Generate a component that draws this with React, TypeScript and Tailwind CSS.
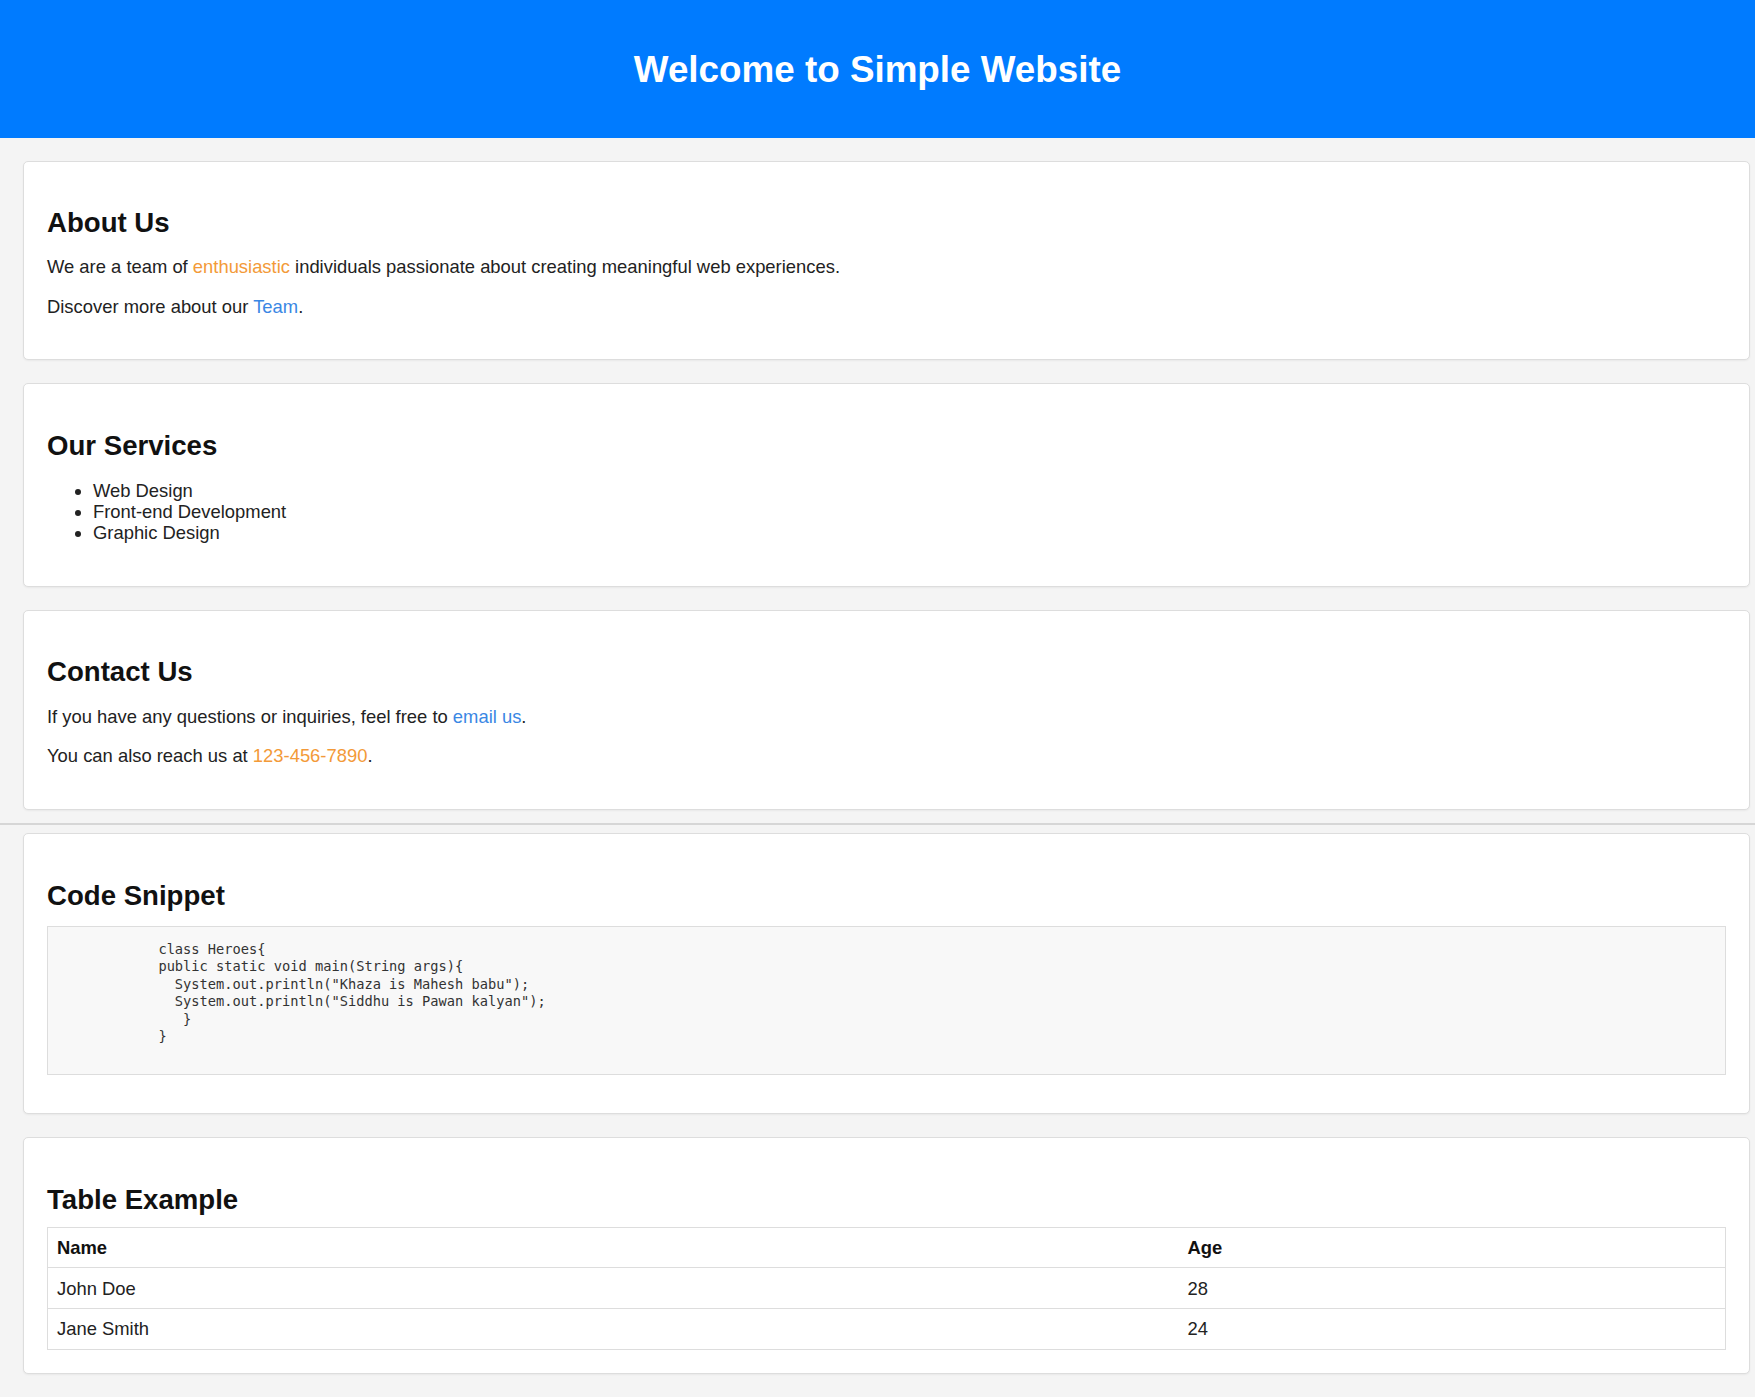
import React from "react";

const sans = { fontFamily: '"Liberation Sans", Arial, sans-serif' };

function Card({ children, className = "" }: { children: React.ReactNode; className?: string }) {
  return (
    <section
      className={`bg-white border border-[#dddddd] rounded-[5px] shadow-[0_1px_2px_rgba(0,0,0,0.05)] px-[23px] pt-[23px] pb-[23px] ${className}`}
    >
      {children}
    </section>
  );
}

function H2({ children, className = "mt-[23px] mb-[18px]" }: { children: React.ReactNode; className?: string }) {
  return <h2 className={`text-[27.6px] leading-[31.7px] font-bold text-[#111] ${className}`}>{children}</h2>;
}

const code = `            class Heroes{
            public static void main(String args){
              System.out.println("Khaza is Mahesh babu");
              System.out.println("Siddhu is Pawan kalyan");
               }
            }`;

export default function App() {
  return (
    <div className="min-h-screen bg-[#f4f4f4] text-[#222] text-[18.4px] leading-[21.2px]" style={sans}>
      <header className="bg-[#007bff] h-[138px] flex items-center justify-center">
        <h1 className="text-white font-bold text-[36.8px] leading-[42px] mt-[1px]">Welcome to Simple Website</h1>
      </header>
      <main className="pl-[23px] pr-[5px] pt-[23px] pb-[23px] flex flex-col">
        <Card>
          <H2 className="mt-[21.5px] mb-[18px]">About Us</H2>
          <p className="mb-[18.4px]">
            We are a team of <span className="text-[#f39a38]">enthusiastic</span> individuals passionate about creating
            meaningful web experiences.
          </p>
          <p className="mb-[19px]">
            Discover more about our <a className="text-[#3a87e4]">Team</a>.
          </p>
        </Card>
        <Card className="mt-[23px]">
          <H2>Our Services</H2>
          <ul className="list-disc pl-[46px] mb-[19.5px]">
            <li>Web Design</li>
            <li>Front-end Development</li>
            <li>Graphic Design</li>
          </ul>
        </Card>
        <Card className="mt-[23px]">
          <H2 className="mt-[22px] mb-[18px]">Contact Us</H2>
          <p className="mb-[18.4px]">
            If you have any questions or inquiries, feel free to <a className="text-[#3a87e4]">email us</a>.
          </p>
          <p className="mb-[20px]">
            You can also reach us at <span className="text-[#f39a38]">123-456-7890</span>.
          </p>
        </Card>
        <div className="h-[2px] bg-[#d6d6d6] -ml-[23px] -mr-[5px] mt-[13px] mb-[8px]" />
        <Card>
          <H2 className="mt-[23px] mb-[18px]">Code Snippet</H2>
          <pre
            className="bg-[#f8f8f8] border border-[#dddddd] px-[11.5px] pt-[13.5px] pb-[28px] mb-[15px] text-[13.7px] leading-[17.6px] text-[#333] -mt-[4px]"
            style={{ fontFamily: '"DejaVu Sans Mono", "Liberation Mono", monospace' }}
          >
            {code}
          </pre>
        </Card>
        <Card className="mt-[23px]">
          <H2 className="mt-[23px] mb-[11px]">Table Example</H2>
          <table className="w-full border-collapse border border-[#dddddd]">
            <thead>
              <tr>
                <th className="w-[1131px] text-left font-bold text-[#111] px-[9px] py-[9.2px] border-b border-[#dddddd]">Name</th>
                <th className="text-left font-bold text-[#111] px-[9px] py-[9.2px] border-b border-[#dddddd]">Age</th>
              </tr>
            </thead>
            <tbody>
              <tr>
                <td className="px-[9px] py-[9.2px] border-b border-[#dddddd]">John Doe</td>
                <td className="px-[9px] py-[9.2px] border-b border-[#dddddd]">28</td>
              </tr>
              <tr>
                <td className="px-[9px] py-[9.2px] border-b border-[#dddddd]">Jane Smith</td>
                <td className="px-[9px] py-[9.2px] border-b border-[#dddddd]">24</td>
              </tr>
            </tbody>
          </table>
        </Card>
      </main>
    </div>
  );
}
